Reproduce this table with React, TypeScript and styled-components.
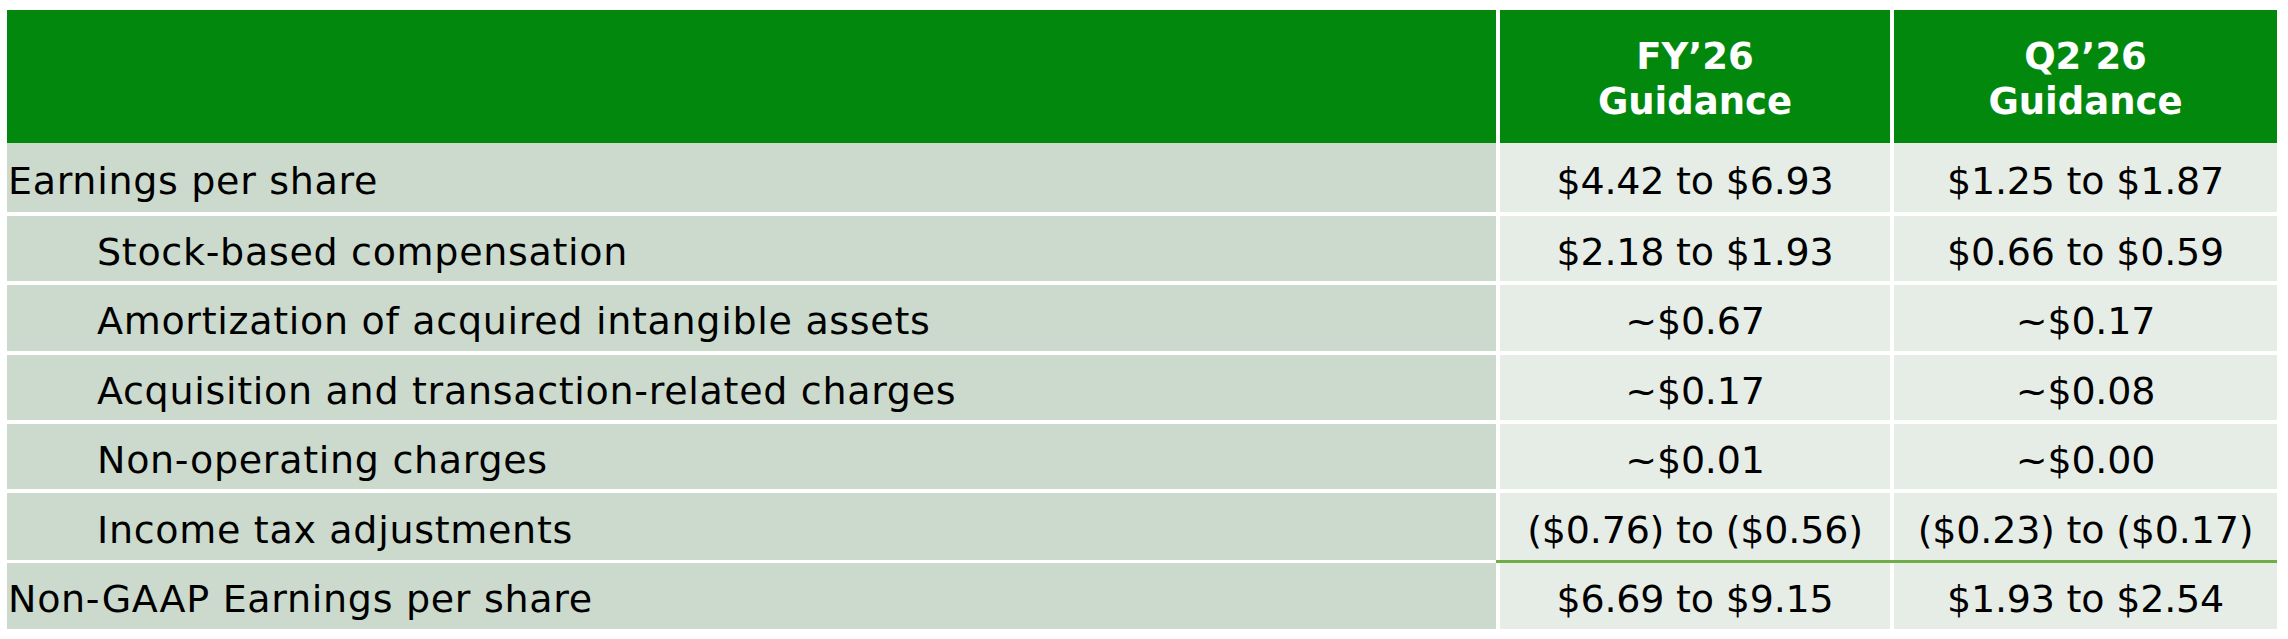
import React from "react";
import styled, { createGlobalStyle } from "styled-components";

const GlobalStyle = createGlobalStyle`
  html, body { margin: 0; padding: 0; background: #ffffff; }
  body { font-family: "DejaVu Sans", "Liberation Sans", sans-serif; color: #000; }
`;

const COLS = "1489px 390px 383px";

const Table = styled.div`
  margin: 10px 0 0 7px;
  width: 2270px;
  display: flex;
  flex-direction: column;
`;

const HeadRow = styled.div`
  display: grid;
  grid-template-columns: ${COLS};
  column-gap: 4px;
  height: 133px;
`;

const HeadCell = styled.div`
  background: #03880e;
  color: #ffffff;
  font-weight: bold;
  font-size: 37px;
  line-height: 45px;
  display: flex;
  align-items: center;
  justify-content: center;
  text-align: center;
  padding-top: 4px;
  box-sizing: border-box;
`;

const Row = styled.div<{ $h: number; $gap: number }>`
  display: grid;
  grid-template-columns: ${COLS};
  column-gap: 4px;
  height: ${(p) => p.$h}px;
  margin-top: ${(p) => p.$gap}px;
`;

const Label = styled.div<{ $indent?: boolean }>`
  background: #ccdacd;
  font-size: 38px;
  letter-spacing: 0.7px;
  display: flex;
  align-items: center;
  padding-left: ${(p) => (p.$indent ? 90 : 1)}px;
  padding-top: 6px;
  box-sizing: border-box;
  white-space: nowrap;
`;

const Value = styled.div`
  background: #e6ede7;
  font-size: 38px;
  letter-spacing: -0.2px;
  display: flex;
  align-items: center;
  justify-content: center;
  padding-top: 6px;
  box-sizing: border-box;
  white-space: nowrap;
`;

const Rule = styled.div`
  margin: 0 0 0 1489px;
  height: 3px;
  background: #70ad47;
`;

type R = { label: string; fy: string; q2: string; indent?: boolean; h: number; gap: number };

const rows: R[] = [
  { label: "Earnings per share", fy: "$4.42 to $6.93", q2: "$1.25 to $1.87", h: 69, gap: 0 },
  { label: "Stock-based compensation", fy: "$2.18 to $1.93", q2: "$0.66 to $0.59", indent: true, h: 65, gap: 4 },
  { label: "Amortization of acquired intangible assets", fy: "~$0.67", q2: "~$0.17", indent: true, h: 66, gap: 4 },
  { label: "Acquisition and transaction-related charges", fy: "~$0.17", q2: "~$0.08", indent: true, h: 65, gap: 4 },
  { label: "Non-operating charges", fy: "~$0.01", q2: "~$0.00", indent: true, h: 65, gap: 4 },
  { label: "Income tax adjustments", fy: "($0.76) to ($0.56)", q2: "($0.23) to ($0.17)", indent: true, h: 67, gap: 4 },
];

export default function App() {
  return (
    <>
      <GlobalStyle />
      <Table>
        <HeadRow>
          <HeadCell />
          <HeadCell>
            FY’26
            <br />
            Guidance
          </HeadCell>
          <HeadCell>
            Q2’26
            <br />
            Guidance
          </HeadCell>
        </HeadRow>
        {rows.map((r) => (
          <Row key={r.label} $h={r.h} $gap={r.gap}>
            <Label $indent={r.indent}>{r.label}</Label>
            <Value>{r.fy}</Value>
            <Value>{r.q2}</Value>
          </Row>
        ))}
        <Rule />
        <Row $h={66} $gap={0}>
          <Label>Non-GAAP Earnings per share</Label>
          <Value>$6.69 to $9.15</Value>
          <Value>$1.93 to $2.54</Value>
        </Row>
      </Table>
    </>
  );
}
